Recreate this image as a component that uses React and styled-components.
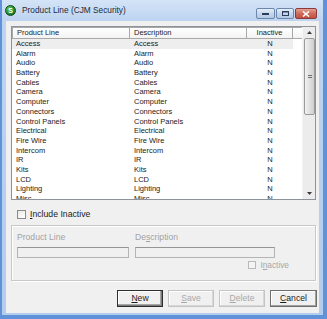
import React from 'react'
import styled, { createGlobalStyle } from 'styled-components'

const GlobalStyle = createGlobalStyle`
  html, body {
    margin: 0;
    padding: 0;
    background: #ffffff;
  }
  body {
    font-family: "Liberation Sans", Arial, sans-serif;
    color: #1b1b1b;
  }
`

const rows = [
  'Access',
  'Alarm',
  'Audio',
  'Battery',
  'Cables',
  'Camera',
  'Computer',
  'Connectors',
  'Control Panels',
  'Electrical',
  'Fire Wire',
  'Intercom',
  'IR',
  'Kits',
  'LCD',
  'Lighting',
  'Misc',
]

const Window = styled.div`
  box-sizing: border-box;
  width: 327px;
  height: 319px;
  padding: 0 4px 4px 2px;
  background: #5f92d8;
  display: flex;
  flex-direction: column;
`

const Frame = styled.div`
  flex: 1;
  min-height: 0;
  display: flex;
  flex-direction: column;
  padding: 0 4px 2px 4px;
  background: linear-gradient(#d4e4f7, #bdd3f0 21px, #b3cdef);
`

const TitleBar = styled.div`
  height: 21px;
  margin: 0 -4px;
  padding-left: 3px;
  display: flex;
  align-items: center;
`

const AppIcon = styled.span`
  box-sizing: border-box;
  width: 11px;
  height: 11px;
  margin-top: -1px;
  border-radius: 50%;
  background: radial-gradient(circle at 35% 30%, #63c45a, #1f8a2a 60%, #14611c);
  border: 1px solid #0e4a16;
  color: #ffffff;
  font: bold 7px "Liberation Sans", Arial, sans-serif;
  line-height: 9px;
  text-align: center;
`

const Title = styled.span`
  margin-left: 6px;
  font-size: 8.3px;
  color: #1e2a38;
  margin-top: -1px;
`

const Controls = styled.div`
  margin-left: auto;
  margin-right: 6px;
  align-self: flex-start;
  margin-top: 8px;
  display: flex;
  gap: 1px;
`

const CaptionButton = styled.div`
  box-sizing: border-box;
  width: ${p => p.$w}px;
  height: 11px;
  border-radius: 2px;
  border: 1px solid ${p => (p.$close ? '#8a3a3a' : '#6a86ab')};
  background: ${p =>
    p.$close
      ? 'linear-gradient(#e3a093, #cf6b5c 50%, #c2503f)'
      : 'linear-gradient(#e6eef9, #c6d6ec 50%, #b5c9e4)'};
  display: flex;
  align-items: center;
  justify-content: center;
`

const Client = styled.div`
  flex: 1;
  min-height: 0;
  background: #f0f0f0;
  display: flex;
  flex-direction: column;
  padding: 5px 3px 0 5px;
`

const ListBox = styled.div`
  box-sizing: border-box;
  height: 174px;
  border: 1px solid #8e939a;
  background: #ffffff;
  display: flex;
  overflow: hidden;
`

const ListMain = styled.div`
  flex: 1;
  display: flex;
  flex-direction: column;
  overflow: hidden;
`

const HeaderRow = styled.div`
  display: grid;
  grid-template-columns: 118px 117px 46px 10px;
  height: 12px;
  flex-shrink: 0;
`

const HeaderCell = styled.div`
  box-sizing: border-box;
  border: 1px solid #a9a9a9;
  border-left: ${p => (p.$first ? '1px solid #a9a9a9' : 'none')};
  background: linear-gradient(#ffffff, #f3f3f3);
  font-size: 7.5px;
  line-height: 10px;
  text-align: ${p => (p.$center ? 'center' : 'left')};
  padding-left: ${p => (p.$center ? '0' : '4px')};
  color: #1b1b1b;
`

const Row = styled.div`
  display: grid;
  grid-template-columns: 118px 117px 46px;
  height: 9.7px;
  flex-shrink: 0;
  width: 281px;
  background: ${p => (p.$selected ? '#eeeeee' : 'transparent')};
  font-size: 7.5px;
  line-height: 9.7px;
  white-space: nowrap;
`

const Cell = styled.div`
  padding-left: ${p => (p.$center ? '0' : '4px')};
  text-align: ${p => (p.$center ? 'center' : 'left')};
  overflow: hidden;
`

const ScrollBar = styled.div`
  width: 12px;
  display: flex;
  flex-direction: column;
  background: #ececec;
  border-left: 1px solid #f4f4f4;
`

const ScrollArrow = styled.div`
  height: 11px;
  flex-shrink: 0;
  display: flex;
  align-items: center;
  justify-content: center;
`

const ScrollThumb = styled.div`
  box-sizing: border-box;
  height: 77px;
  flex-shrink: 0;
  margin: 0 0 0 1px;
  border: 1px solid #9a9a9a;
  border-radius: 2px;
  background: linear-gradient(90deg, #f2f2f2, #dcdcdc 60%, #cfcfcf);
  display: flex;
  align-items: center;
  justify-content: center;
`

const ScrollTrack = styled.div`
  flex: 1;
`

const Grip = styled.div`
  width: 4px;
  height: 4px;
  background: repeating-linear-gradient(#6f6f6f 0 1px, transparent 1px 2px);
`

const CheckRow = styled.label`
  display: flex;
  align-items: center;
  height: 16px;
  margin-top: 6px;
  padding-left: 6px;
  font-size: 8.7px;
  color: #1b1b1b;
`

const Box = styled.span`
  box-sizing: border-box;
  width: ${p => p.$size}px;
  height: ${p => p.$size}px;
  border: 1px solid ${p => (p.$disabled ? '#b9b9b9' : '#8a8a8a')};
  background: ${p =>
    p.$disabled ? '#f4f4f4' : 'linear-gradient(135deg, #e8e8e8, #ffffff)'};
  margin-right: 4px;
`

const Key = styled.span`
  text-decoration: underline;
  text-underline-offset: 1px;
`

const GroupBox = styled.fieldset`
  box-sizing: border-box;
  margin: 3px 0 0 0;
  height: 56px;
  border: 1px solid #c8c8c8;
  box-shadow: inset 1px 1px 0 #ffffff, 1px 1px 0 #ffffff;
  padding: 4px 5px 0 5px;
  display: grid;
  grid-template-columns: 112px 140px 1fr;
  column-gap: 6px;
  grid-template-rows: 13px 13px 14px;
  row-gap: 0;
`

const FieldLabel = styled.div`
  font-size: 8.6px;
  line-height: 13px;
  color: #a3a3a3;
  margin-top: 1px;
`

const Input = styled.div`
  box-sizing: border-box;
  margin-top: 4px;
  height: 11px;
  border: 1px solid #b4b4b4;
  border-top-color: #959595;
  background: #f0f0f0;
`

const InactiveRow = styled.div`
  grid-column: 2 / 4;
  display: flex;
  justify-content: flex-end;
  align-items: center;
  padding-right: 21px;
  margin-top: 3px;
  font-size: 8.3px;
  color: #a8a8a8;
`

const ButtonRow = styled.div`
  display: flex;
  justify-content: flex-end;
  gap: 5px;
  margin-top: 9px;
  margin-right: -1px;
`

const Button = styled.div`
  box-sizing: border-box;
  width: ${p => p.$w || 46}px;
  height: 17px;
  background: #f0f0f0;
  border: 1px solid ${p => (p.$disabled ? '#c4c4c4' : p.$default ? '#2e2e2e' : '#6e6e6e')};
  box-shadow: ${p =>
    p.$disabled
      ? 'inset -1px -1px 0 #d8d8d8, inset 1px 1px 0 #ffffff'
      : p.$default
        ? 'inset -1px -1px 0 #7a7a7a, inset -2px -2px 0 #a5a5a5, inset 1px 1px 0 #ffffff'
        : 'inset -1px -1px 0 #a0a0a0, inset 1px 1px 0 #ffffff'};
  font-size: 8.6px;
  line-height: 15px;
  text-align: center;
  color: ${p => (p.$disabled ? '#a8a8a8' : '#1b1b1b')};
`

const Triangle = ({ up }) => (
  <svg width="5" height="3" viewBox="0 0 5 3">
    <path d={up ? 'M2.5 0 L5 3 L0 3 Z' : 'M0 0 L5 0 L2.5 3 Z'} fill="#3a3a3a" />
  </svg>
)

export default function App() {
  return (
    <>
      <GlobalStyle />
      <Window>
        <Frame>
          <TitleBar>
            <AppIcon>S</AppIcon>
            <Title>Product Line (CJM Security)</Title>
            <Controls>
              <CaptionButton $w={19}>
                <svg width="7" height="2">
                  <rect width="7" height="2" fill="#2a3d5c" />
                </svg>
              </CaptionButton>
              <CaptionButton $w={18}>
                <svg width="7" height="5">
                  <rect x="0.5" y="0.5" width="6" height="4" fill="none" stroke="#2a3d5c" />
                  <rect x="0" y="0" width="7" height="1.5" fill="#2a3d5c" />
                </svg>
              </CaptionButton>
              <CaptionButton $w={22} $close>
                <svg width="8" height="6">
                  <path d="M1 0.5 L7 5.5 M7 0.5 L1 5.5" stroke="#ffffff" strokeWidth="1.6" />
                </svg>
              </CaptionButton>
            </Controls>
          </TitleBar>
          <Client>
            <ListBox>
              <ListMain>
                <HeaderRow>
                  <HeaderCell $first>Product Line</HeaderCell>
                  <HeaderCell>Description</HeaderCell>
                  <HeaderCell $center>Inactive</HeaderCell>
                  <HeaderCell />
                </HeaderRow>
                {rows.map((r, i) => (
                  <Row key={r} $selected={i === 0}>
                    <Cell>{r}</Cell>
                    <Cell>{r}</Cell>
                    <Cell $center>N</Cell>
                  </Row>
                ))}
              </ListMain>
              <ScrollBar>
                <ScrollArrow>
                  <Triangle up />
                </ScrollArrow>
                <ScrollThumb>
                  <Grip />
                </ScrollThumb>
                <ScrollTrack />
                <ScrollArrow>
                  <Triangle />
                </ScrollArrow>
              </ScrollBar>
            </ListBox>
            <CheckRow>
              <Box $size={9} />
              <span>
                <Key>I</Key>nclude Inactive
              </span>
            </CheckRow>
            <GroupBox>
              <FieldLabel>Product Line</FieldLabel>
              <FieldLabel>
                De<Key>s</Key>cription
              </FieldLabel>
              <div />
              <Input />
              <Input />
              <div />
              <InactiveRow>
                <Box $size={8} $disabled />
                <span>
                  I<Key>n</Key>active
                </span>
              </InactiveRow>
            </GroupBox>
            <ButtonRow>
              <Button $default>
                <Key>N</Key>ew
              </Button>
              <Button $disabled>
                <Key>S</Key>ave
              </Button>
              <Button $disabled>
                <Key>D</Key>elete
              </Button>
              <Button $w={47}>
                <Key>C</Key>ancel
              </Button>
            </ButtonRow>
          </Client>
        </Frame>
      </Window>
    </>
  )
}
